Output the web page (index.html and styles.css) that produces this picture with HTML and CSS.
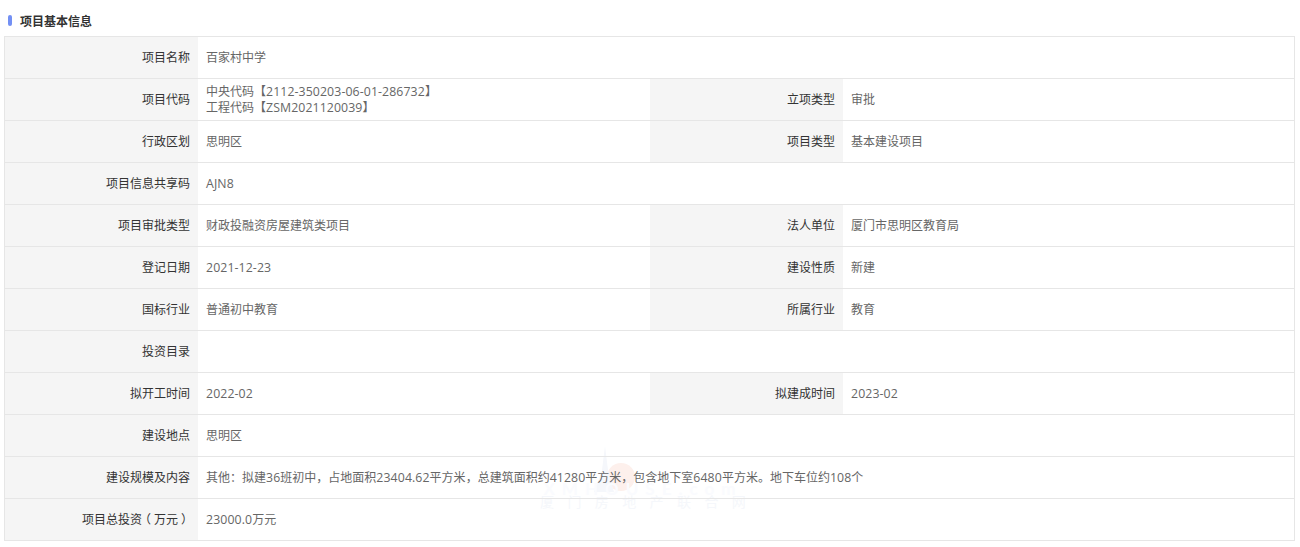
FILE: index.html
```html
<!DOCTYPE html>
<html lang="zh-CN">
<head>
<meta charset="utf-8">
<title>项目基本信息</title>
<link rel="stylesheet" href="styles.css">
</head>
<body>
<div class="watermark" aria-hidden="true">
  <svg class="wm-logo" width="60" height="46" viewBox="0 0 60 46">
    <circle cx="31" cy="31" r="14" fill="#fdf0ec"/>
    <path d="M15 0 L18 24 L24 46 L4 46 L12 24 Z" fill="#f5f7fb"/>
  </svg>
  <div class="wm-latin">XMHOUSE.com</div>
  <div class="wm-name">厦门房地产联合网</div>
</div>
<section class="panel">
  <h2 class="title"><span class="mark"></span>项目基本信息</h2>
  <div class="sheet">
    <div class="row"><div class="label">项目名称</div><div class="value wide">百家村中学</div></div>
    <div class="row"><div class="label">项目代码</div><div class="value"><span>中央代码【<span class="num">2112-350203-06-01-286732</span>】</span><span>工程代码【<span class="num">ZSM2021120039</span>】</span></div><div class="label">立项类型</div><div class="value">审批</div></div>
    <div class="row"><div class="label">行政区划</div><div class="value">思明区</div><div class="label">项目类型</div><div class="value">基本建设项目</div></div>
    <div class="row"><div class="label">项目信息共享码</div><div class="value wide"><span class="num">AJN8</span></div></div>
    <div class="row"><div class="label">项目审批类型</div><div class="value">财政投融资房屋建筑类项目</div><div class="label">法人单位</div><div class="value">厦门市思明区教育局</div></div>
    <div class="row"><div class="label">登记日期</div><div class="value"><span class="num">2021-12-23</span></div><div class="label">建设性质</div><div class="value">新建</div></div>
    <div class="row"><div class="label">国标行业</div><div class="value">普通初中教育</div><div class="label">所属行业</div><div class="value">教育</div></div>
    <div class="row"><div class="label">投资目录</div><div class="value wide"></div></div>
    <div class="row"><div class="label">拟开工时间</div><div class="value"><span class="num">2022-02</span></div><div class="label">拟建成时间</div><div class="value"><span class="num">2023-02</span></div></div>
    <div class="row"><div class="label">建设地点</div><div class="value wide">思明区</div></div>
    <div class="row"><div class="label">建设规模及内容</div><div class="value wide"><span>其他<span class="tc">：</span>拟建<span class="num">36</span>班初中<span class="tc">，</span>占地面积<span class="num">23404.62</span>平方米<span class="tc">，</span>总建筑面积约<span class="num">41280</span>平方米<span class="tc">，</span>包含地下室<span class="num">6480</span>平方米。地下车位约<span class="num">108</span>个</span></div></div>
    <div class="row"><div class="label"><span class="nowrap">项目总投资<span class="lp">（</span>万元<span class="rp">）</span></span></div><div class="value wide"><span><span class="num">23000.0</span>万元</span></div></div>
  </div>
</section>
</body>
</html>
```
FILE: styles.css
```css
* { box-sizing: border-box; }
html, body { margin: 0; padding: 0; background: #fff; }
body {
  width: 1300px;
  height: 547px;
  overflow: hidden;
  position: relative;
  font-family: "Lato", "Noto Sans CJK SC", sans-serif;
  font-size: 12px;
  color: #666;
}
.panel { position: relative; padding: 0 5px 0 4px; }
.title {
  display: flex;
  align-items: center;
  gap: 8px;
  height: 36px;
  margin: 0;
  padding: 4px 0 0 4px;
  font-size: 12px;
  font-weight: bold;
  color: #333;
}
.mark {
  width: 4px;
  height: 11px;
  border-radius: 2px;
  background: #7390f4;
}
.sheet {
  border: 1px solid #e6e6e6;
  border-bottom: 0;
}
.row {
  display: grid;
  grid-template-columns: 193px 452px 193px 1fr;
  height: 42px;
  border-bottom: 1px solid #e6e6e6;
}
.label {
  display: flex;
  align-items: center;
  justify-content: flex-end;
  padding-right: 8px;
  line-height: 16px;
  background: #f5f5f5;
  color: #333;
}
.nowrap { white-space: nowrap; }
.value {
  display: flex;
  flex-direction: column;
  justify-content: center;
  padding-left: 8px;
  line-height: 16px;
  color: #666;
}
.wide { grid-column: 2 / 5; }
.num { font-family: "Open Sans", sans-serif; font-size: 12.3px; letter-spacing: 0.1px; }
.tc { font-family: "Noto Sans CJK TC", sans-serif; }
.lp { margin-left: -3px; margin-right: 3px; }
.rp { margin-left: 3px; margin-right: -3px; }
.watermark {
  position: absolute;
  left: 538px;
  top: 446px;
  width: 210px;
  height: 64px;
  pointer-events: none;
  text-align: center;
}
.wm-logo { position: absolute; left: 52px; top: 0; }
.wm-latin {
  position: absolute;
  left: 0;
  right: 0;
  top: 37px;
  line-height: 12px;
  font-size: 17px;
  font-weight: bold;
  letter-spacing: 7px;
  white-space: nowrap;
  color: #fafbfe;
}
.wm-name {
  position: absolute;
  left: 2px;
  top: 49px;
  white-space: nowrap;
  line-height: 14px;
  font-size: 14px;
  letter-spacing: 13.4px;
  color: #f5f7fb;
}
```
